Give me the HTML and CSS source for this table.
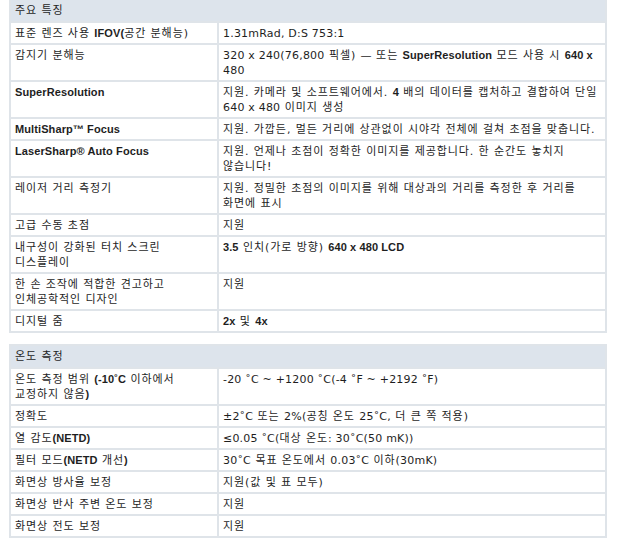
FILE: index.html
```html
<!DOCTYPE html>
<html lang="ko">
<head>
<meta charset="utf-8">
<link rel="stylesheet" href="styles.css">
</head>
<body>
<div class="page">
<table class="spec">
  <colgroup><col class="c1"><col class="c2"></colgroup>
  <tr class="head"><th colspan="2">주요 특징</th></tr>
  <tr><td>표준 렌즈 사용 <b>IFOV(</b>공간 분해능)</td><td><span class="l">1.31mRad, D:S 753:1</span></td></tr>
  <tr class="tall"><td>감지기 분해능</td><td><span class="l">320 x 240(76,800</span> 픽셀) <span class="l">—</span> 또는 <b>SuperResolution</b> 모드 사용 시 <b>640 x</b> <span class="l">480</span></td></tr>
  <tr class="tall"><td><b>SuperResolution</b></td><td>지원. 카메라 및 소프트웨어에서. <b>4</b> 배의 데이터를 캡처하고 결합하여 단일 <span class="l">640 x 480</span> 이미지 생성</td></tr>
  <tr><td><b>MultiSharp™ Focus</b></td><td>지원. 가깝든, 멀든 거리에 상관없이 시야각 전체에 걸쳐 초점을 맞춥니다.</td></tr>
  <tr class="tall"><td><b>LaserSharp® Auto Focus</b></td><td>지원. 언제나 초점이 정확한 이미지를 제공합니다. 한 순간도 놓치지 않습니다!</td></tr>
  <tr class="tall"><td>레이저 거리 측정기</td><td>지원. 정밀한 초점의 이미지를 위해 대상과의 거리를 측정한 후 거리를 화면에 표시</td></tr>
  <tr><td>고급 수동 초점</td><td>지원</td></tr>
  <tr class="tall"><td>내구성이 강화된 터치 스크린<br>디스플레이</td><td><b>3.5</b> 인치(가로 방향) <b>640 x 480 LCD</b></td></tr>
  <tr class="tall"><td>한 손 조작에 적합한 견고하고<br>인체공학적인 디자인</td><td>지원</td></tr>
  <tr><td>디지털 줌</td><td><b>2x</b> 및 <b>4x</b></td></tr>
</table>

<table class="spec">
  <colgroup><col class="c1"><col class="c2"></colgroup>
  <tr class="head"><th colspan="2">온도 측정</th></tr>
  <tr class="tall"><td>온도 측정 범위 <b>(-10˚C</b> 이하에서<br>교정하지 않음<b>)</b></td><td><span class="l">-20 ˚C ~ +1200 ˚C(-4 ˚F ~ +2192 ˚F)</span></td></tr>
  <tr><td>정확도</td><td><span class="l">±2˚C</span> 또는 <span class="l">2%(</span>공칭 온도 <span class="l">25˚C,</span> 더 큰 쪽 적용)</td></tr>
  <tr><td>열 감도<b>(NETD)</b></td><td><span class="l">≤0.05 ˚C(</span>대상 온도<span class="l">: 30˚C(50 mK))</span></td></tr>
  <tr><td>필터 모드<b>(NETD</b> 개선<b>)</b></td><td><span class="l">30˚C</span> 목표 온도에서 <span class="l">0.03˚C</span> 이하<span class="l">(30mK)</span></td></tr>
  <tr><td>화면상 방사율 보정</td><td>지원(값 및 표 모두)</td></tr>
  <tr><td>화면상 반사 주변 온도 보정</td><td>지원</td></tr>
  <tr><td>화면상 전도 보정</td><td>지원</td></tr>
</table>
</div>
</body>
</html>
```

FILE: styles.css
```css
html, body {
  margin: 0;
  padding: 0;
  background: #ffffff;
}
.page {
  padding: 0 0 0 9px;
  margin-top: -2px;
  width: 596px;
}
.spec {
  width: 596px;
  border-collapse: collapse;
  table-layout: fixed;
  border: 2px solid #dfe4e9;
  font-family: "DejaVu Sans", "Noto Sans CJK KR", sans-serif;
  font-size: 11px;
  line-height: 15px;
  letter-spacing: 0.9px;
  word-break: keep-all;
  color: #1e1e1e;
  margin-bottom: 11px;
}
.spec .c1 { width: 208px; }
.spec .c2 { width: 388px; }
.spec th {
  text-align: left;
  font-weight: normal;
  background: #dde4ec;
  padding: 3px 4px 3px 4px;
  height: 15px;
  border: 2px solid #dfe4e9;
}
.spec td {
  vertical-align: top;
  padding: 3px 4px 2px 4px;
  border: 2px solid #dfe4e9;
}
.spec tr.tall td {
  height: 30px;
}
.spec .l {
  letter-spacing: 0.2px;
}
.spec b {
  font-family: "Liberation Sans", "Noto Sans CJK KR", sans-serif;
  font-weight: bold;
  letter-spacing: 0.1px;
}
```
